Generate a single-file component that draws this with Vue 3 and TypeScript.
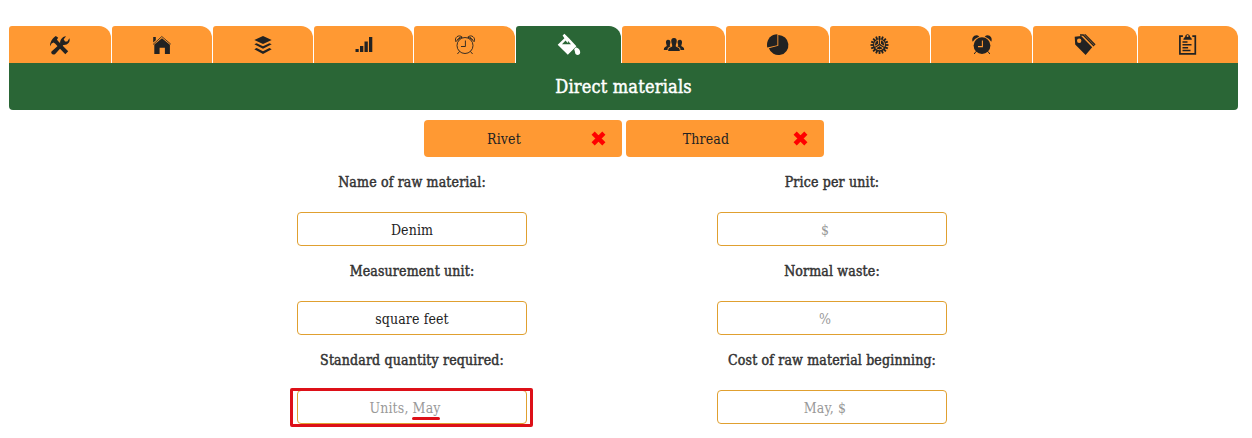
<script setup lang="ts">
import { ref } from 'vue'

interface Field {
  label: string
  value: string
  hint: string
  numeric: boolean
  marked?: boolean
}

const tabs = ['tools', 'home', 'layers', 'signal', 'clock', 'fill', 'group', 'pie', 'gear', 'alarm', 'tags', 'clipboard']
const active = ref('fill')
const materials = ref(['Rivet', 'Thread'])
const fields = ref<Field[]>([
  { label: 'Name of raw material:', value: 'Denim', hint: '', numeric: false },
  { label: 'Price per unit:', value: '', hint: '$', numeric: true },
  { label: 'Measurement unit:', value: 'square feet', hint: '', numeric: false },
  { label: 'Normal waste:', value: '', hint: '%', numeric: true },
  { label: 'Standard quantity required:', value: '', hint: 'Units, May', numeric: true, marked: true },
  { label: 'Cost of raw material beginning:', value: '', hint: 'May, $', numeric: true },
])

const teeth = Array.from({ length: 16 }, (_, i) => i * 22.5)

function remove(name: string) {
  materials.value = materials.value.filter((m) => m !== name)
}
</script>

<template>
  <main class="page">
    <nav class="tabs">
      <button v-for="t in tabs" :key="t" class="tab" :class="{ active: t === active }" @click="active = t">
        <svg class="icon" viewBox="0 0 24 24" width="24" height="24" fill="currentColor">
          <g v-if="t === 'tools'">
            <path d="M2 13.2C1.9 9.4 4.2 5.2 7.8 3L10.2 4.8 8.9 6.5 10 8.1 20.2 18.2 17.3 21.2 7 10.5 5.5 9.4 3.6 10.6Z" />
            <path d="M3.5 18.6 12.2 10.8C11.7 7.4 13.8 3.5 18.1 3.2L15.7 6.3 17 8.6 19.3 8.4 21.4 5.2C22.6 9.2 19.5 12.2 15.4 11.9L7.2 20.9C5 22.6 2.3 20.4 3.5 18.6Z" />
          </g>
          <g v-else-if="t === 'home'">
            <path d="M3.2 4h2.6v3.3L3.2 9.6Z" />
            <path d="M12 5.2 19.9 11.8V21h-5v-6.2H9.6V21H4.3v-9.4Z" />
            <path d="M3 11.5 11.8 3.5 20.8 11.2" fill="none" stroke="currentColor" stroke-width="0.8" />
          </g>
          <g v-else-if="t === 'layers'">
            <path d="M12 3 20.7 7 12 11 3.3 7Z" />
            <path d="M3.3 11.2 5.6 10.2 12 13.2 18.4 10.2 20.7 11.2 12 15.8ZM3.3 16.2 5.6 15.1 12 18.2 18.4 15.1 20.7 16.2 12 21Z" />
          </g>
          <path v-else-if="t === 'signal'" d="M3.5 16h3.2v3H3.5ZM8 13h3.3v6H8ZM12.5 8.6h3.3V19h-3.3ZM17 4h3.3v15H17Z" />
          <g v-else-if="t === 'clock'" fill="none" stroke="currentColor" stroke-width="0.9">
            <circle cx="12" cy="12.5" r="8" />
            <path d="M2.9 8.7C.9 4.7 5.8.8 9.2 4.2Q5.2 5.2 2.9 8.7ZM21.1 8.7C23.1 4.7 18.2.8 14.8 4.2Q18.8 5.2 21.1 8.7ZM4.2 7.2 7.4 3.8M19.8 7.2 16.6 3.8M12.4 7.5v6H8M6.6 18.4 4.4 21M17.4 18.4 19.6 21" />
          </g>
          <g v-else-if="t === 'fill'">
            <path fill-rule="evenodd" d="M5.6 2.4 7.4.8 12 5.2 19.4 13.2 10.8 21.7.7 11.8 7.4 5.2ZM8.6 7.4 5 11.2H14L10.8 7.8 11.2 9.8 10.2 9.5Z" />
            <path d="M17.2 16.2 18.6 14.5C21.3 14.5 23.2 17 23.2 19.3 23.2 23 17.8 22.6 18 18.9Z" />
          </g>
          <g v-else-if="t === 'group'">
            <path d="M12 5C14.2 5 15 6.7 14.7 8.7 14.5 10.5 13.6 11.3 13.8 13.4L16.8 15C17.6 15.5 17.8 16.5 17.8 18H6.2C6.2 16.5 6.4 15.5 7.2 15L10.2 13.4C10.4 11.3 9.5 10.5 9.3 8.7 9 6.7 9.8 5 12 5Z" />
            <path d="M6 6.8C7.8 6.8 8.6 8 8.4 9.7L7.7 12.6 8.5 13.2 5.8 15 5.5 16.9H1.8Q1.7 14.7 3.2 14L4.8 13 4 10.1C3.7 8.1 4.4 6.8 6 6.8ZM18 6.8C16.2 6.8 15.4 8 15.6 9.7L16.3 12.6 15.5 13.2 18.2 15 18.5 16.9H22.2Q22.3 14.7 20.8 14L19.2 13 20 10.1C20.3 8.1 19.6 6.8 18 6.8Z" />
          </g>
          <g v-else-if="t === 'pie'" transform="translate(-0.5 0)">
            <path d="M12.8 2.1A10 10 0 1 1 3.4 15.2L12.8 12.8Z" />
            <path d="M11.9 1.2V12.2L1.8 14.4C.2 7.6 4.8 1.2 11.9 1.2Z" />
          </g>
          <g v-else-if="t === 'gear'" transform="translate(-0.5 0)">
            <rect v-for="a in teeth" :key="a" x="11.1" y="3" width="1.8" height="3" :transform="`rotate(${a} 12 12)`" />
            <circle cx="12" cy="12" r="6.6" />
            <path class="spokes" d="M11.1 6.8V11L7.3 13.3A5 5 0 0 1 11.1 6.8ZM13 6.8V11L16.8 13.3A5 5 0 0 0 13 6.8ZM8.2 15 12 12.8 15.8 15A5 5 0 0 1 8.2 15Z" />
          </g>
          <g v-else-if="t === 'alarm'">
            <circle cx="12" cy="12.6" r="8.4" />
            <path d="M2.7 8.7C.8 4.6 5.4.1 9.3 3.4Q5.4 5 2.7 8.7ZM21.3 8.7C23.2 4.6 18.6.1 14.7 3.4Q18.6 5 21.3 8.7Z" />
            <path d="M6 18.5 4.2 21M18 18.5l1.8 2.5" stroke="currentColor" />
            <path class="cut" d="M12.4 7.6v6H8" />
          </g>
          <g v-else-if="t === 'tags'">
            <path fill-rule="evenodd" d="M1.7 3.8 8.2 3 19.2 14.3 12.6 22 2.2 11.5ZM8.4 7.8A2.2 2.2 0 1 0 4 7.8 2.2 2.2 0 1 0 8.4 7.8Z" />
            <path d="M7 2h3.2L21 13" fill="none" stroke="currentColor" stroke-width="1.4" />
            <path d="M11 1.2 12.6 1.2 22.5 11.2 21.8 12.6Z" />
          </g>
          <g v-else transform="translate(-0.5 0)">
            <path d="M7.4 3.2H4.4v17.6h15.4V3.2h-3" fill="none" stroke="currentColor" stroke-width="1.7" />
            <path fill-rule="evenodd" d="M7.8 6.8Q8 4.4 9.6 4C9.8.2 14.4.2 14.6 4Q16.2 4.4 16.4 6.8ZM13.1 3A1 1 0 1 0 11.1 3 1 1 0 1 0 13.1 3Z" />
            <path d="M7 8.9h5M7 11.8h9M7 14.7h5.6M7 17.6h8" stroke="currentColor" stroke-width="1.5" />
          </g>
        </svg>
      </button>
    </nav>
    <h1 class="title">Direct materials</h1>

    <div class="chips">
      <div v-for="m in materials" :key="m" class="chip">
        <span class="chip-name">{{ m }}</span>
        <button class="remove" :aria-label="`Remove ${m}`" @click="remove(m)">
          <svg viewBox="0 0 14 14" width="15" height="15"><path d="M2 2 12 12M12 2 2 12" stroke="#f00" stroke-width="4.2" /></svg>
        </button>
      </div>
    </div>

    <form class="fields" @submit.prevent>
      <label v-for="f in fields" :key="f.label" class="field">
        <span class="caption">{{ f.label }}</span>
        <span class="control">
          <input v-model="f.value" :class="{ numeric: f.numeric }" :placeholder="f.hint" />
          <span v-if="f.marked" class="frame"></span>
          <span v-if="f.marked" class="underline"></span>
        </span>
      </label>
    </form>
  </main>
</template>

<style>
body {
  background: #fff;
  overflow: hidden;
}
</style>

<style scoped>
.page {
  box-sizing: border-box;
  width: 1252px;
  height: 438px;
  padding: 26px 14px 0 9px;
  font-family: 'Roboto Slab', 'DejaVu Serif Condensed', 'DejaVu Serif', serif;
  font-stretch: condensed;
  font-size: 14px;
  color: #222;
}
.tabs {
  display: grid;
  grid-template-columns: 102px 100px 100px 99px 101px 105px 103px 103px 100px 101px 104px 100px;
  gap: 1px;
}
.tab {
  display: flex;
  justify-content: center;
  height: 37px;
  padding: 7px 0 0;
  border: 0;
  border-radius: 3px 12px 0 0;
  background: #ff9933;
  color: #222;
}
.tab.active {
  background: #2a6636;
  color: #fff;
}
.icon {
  display: block;
}
.cut {
  fill: none;
  stroke: #ff9933;
  stroke-width: 1.1;
}
.spokes {
  fill: none;
  stroke: #ff9933;
  stroke-width: 0.9;
}
.title {
  height: 47px;
  margin: 0;
  border-radius: 0 0 4px 4px;
  background: #2a6636;
  color: #fff;
  font-size: 18px;
  font-weight: 400;
  letter-spacing: 0.2px;
  line-height: 47px;
  text-align: center;
  -webkit-text-stroke: 0.45px #fff;
}
.chips {
  display: flex;
  justify-content: center;
  gap: 4px;
  margin-top: 10px;
  padding-left: 1px;
}
.chip {
  display: flex;
  width: 198px;
  height: 37px;
  border-radius: 4px;
  background: #ff9933;
}
.chip-name {
  width: 160px;
  letter-spacing: 0.15px;
  line-height: 39px;
  text-align: center;
}
.remove {
  height: 15px;
  margin: 11px 0 0 7px;
  padding: 0;
  border: 0;
  background: none;
}
.remove svg {
  display: block;
}
.fields {
  display: grid;
  grid-template-columns: 420px 420px;
  grid-auto-rows: 89px;
  margin: 11px 0 0 193px;
}
.field {
  display: flex;
  flex-direction: column;
  align-items: center;
}
.caption {
  height: 44px;
  letter-spacing: 0.16px;
  line-height: 28px;
  color: #333;
  white-space: nowrap;
  -webkit-text-stroke: 0.45px #333;
}
.control {
  position: relative;
  display: block;
  width: 230px;
  height: 34px;
}
input {
  box-sizing: border-box;
  display: block;
  width: 230px;
  height: 34px;
  padding: 2px 0 0;
  border: 1px solid #e0a030;
  border-radius: 4px;
  background: #fff;
  color: #222;
  font: inherit;
  letter-spacing: 0.12px;
  text-align: center;
  outline: 0;
}
.numeric {
  padding-right: 14px;
}
input::placeholder {
  color: #999;
}
.frame {
  position: absolute;
  inset: -2px -6px -3px -7px;
  border: 3px solid #dd1018;
  border-radius: 2px;
}
.underline {
  position: absolute;
  left: 115px;
  top: 27px;
  width: 28px;
  height: 3px;
  border-radius: 2px;
  background: #dd1018;
}
</style>
